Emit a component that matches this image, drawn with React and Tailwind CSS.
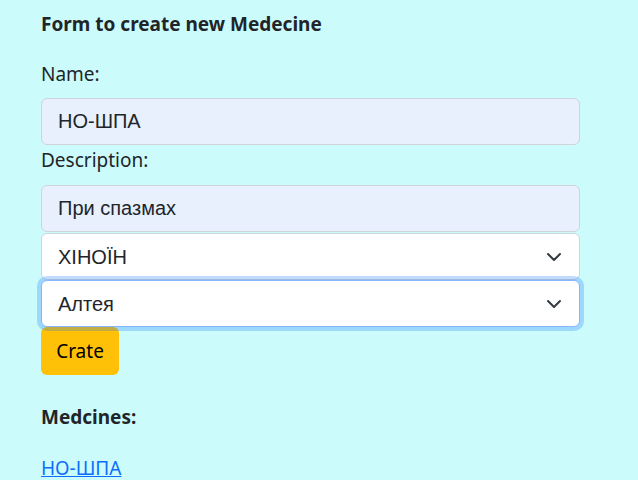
import { useState } from 'react';

const Chevron = () => (
  <svg
    width="16"
    height="10"
    viewBox="0 0 16 10"
    className="pointer-events-none absolute right-[18px] top-1/2 -translate-y-1/2"
  >
    <path
      d="m2 2 6 6 6-6"
      fill="none"
      stroke="#343a40"
      strokeWidth="2"
      strokeLinecap="round"
      strokeLinejoin="round"
    />
  </svg>
);

const App = () => {
  const [name, setName] = useState('НО-ШПА');
  const [description, setDescription] = useState('При спазмах');

  return (
    <div className="min-h-screen w-full bg-[#cbfbfb] text-[#212529] font-['Noto_Sans',sans-serif] text-[19px]">
      <div className="w-[539px] ml-[41px] pt-[12px]">
        {/* Form */}
        <h5 className="font-bold leading-[24px] mb-[23px]">
          Form to create new Medecine
        </h5>

        <label className="block leading-[30px] mb-[9px]">Name:</label>
        <input
          value={name}
          onChange={(e) => setName(e.target.value)}
          className="block w-full h-[47px] px-4 bg-[#e8f0fe] border border-[#ced4da] rounded-[6px] text-[20px] font-['Liberation_Sans',sans-serif] outline-none"
        />

        <label className="block leading-[30px] mb-[10px]">Description:</label>
        <input
          value={description}
          onChange={(e) => setDescription(e.target.value)}
          className="block w-full h-[47px] px-4 bg-[#e8f0fe] border border-[#ced4da] rounded-[6px] text-[20px] font-['Liberation_Sans',sans-serif] outline-none"
        />

        <div className="relative mt-px">
          <select className="block w-full h-[47px] pl-4 pr-12 bg-white border border-[#ced4da] rounded-[6px] text-[20px] font-['Liberation_Sans',sans-serif] appearance-none outline-none">
            <option>ХІНОЇН</option>
          </select>
          <Chevron />
        </div>

        <div className="relative">
          <select className="block w-full h-[47px] pl-4 pr-12 bg-white border border-[#86b7fe] rounded-[6px] text-[20px] font-['Liberation_Sans',sans-serif] appearance-none outline-none shadow-[0_0_0_4px_rgba(13,110,253,0.25)]">
            <option>Алтея</option>
          </select>
          <Chevron />
        </div>

        <button className="h-[48px] w-[78px] bg-[#ffc107] rounded-[6px] text-[19px] text-black">
          Crate
        </button>

        {/* List */}
        <h6 className="mt-[30px] font-bold leading-[24px]">Medcines:</h6>
        <ul className="mt-[24px]">
          <li>
            <a href="#" className="text-[#0d6efd] underline leading-[30px]">
              НО-ШПА
            </a>
          </li>
        </ul>
      </div>
    </div>
  );
};

export default App;
